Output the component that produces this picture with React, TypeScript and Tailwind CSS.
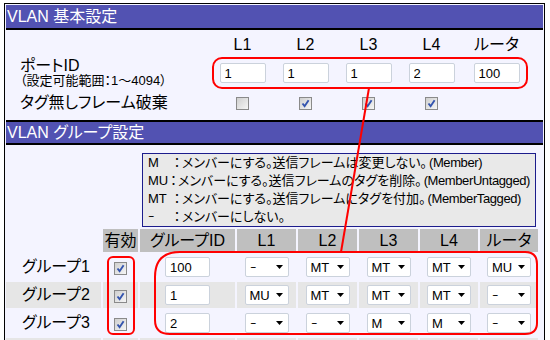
import React from 'react'

const Check = ({ on }: { on: boolean }) => (
  <span className="flex h-[13px] w-[13px] items-center justify-center border border-[#8a8a8a] bg-linear-to-br from-[#cfcfcf] to-[#f6f6f6]">
    {on && (
      <svg width="9" height="9" viewBox="0 0 9 9">
        <path d="M1.5 4.5L3.6 7.2L7.6 1.2" fill="none" stroke="#3454ae" strokeWidth="1.9" />
      </svg>
    )}
  </span>
)

const Field = ({ v, w = 'w-[46px]' }: { v: string; w?: string }) => (
  <input
    readOnly
    value={v}
    className={`${w} h-[20px] rounded-[2px] border border-[#cbd2dc] bg-white px-[4px] text-[13px] text-black outline-none`}
  />
)

// the dash option is drawn narrow, like the original control font
const Dash = () => <span className="inline-block w-[7px] origin-left scale-x-[0.5]">－</span>

const Sel = ({ v }: { v: string }) => (
  <div className="flex h-[20px] w-[44px] items-center justify-between rounded-[2px] border border-[#cbd2dc] bg-white pl-[4px] pr-[5px] text-[13px] leading-none">
    <span>{v === '－' ? <Dash /> : v}</span>
    <svg width="7" height="4" viewBox="0 0 7 4">
      <path d="M0 0H7L3.5 4Z" fill="#000" />
    </svg>
  </div>
)

const cols = ['L1', 'L2', 'L3', 'L4', 'ルータ']
const portIds = ['1', '1', '1', '2', '100']
const untagged = [false, true, true, true]

const legend = [
  ['M', 'メンバーにする。送信フレームは変更しない。', '(Member)'],
  ['MU', 'メンバーにする。送信フレームのタグを削除。', '(MemberUntagged)'],
  ['MT', 'メンバーにする。送信フレームにタグを付加。', '(MemberTagged)'],
  ['－', 'メンバーにしない。', ''],
]

const groups = [
  { name: 'グループ1', id: '100', ports: ['－', 'MT', 'MT', 'MT', 'MU'] },
  { name: 'グループ2', id: '1', ports: ['MU', 'MT', 'MT', 'MT', '－'] },
  { name: 'グループ3', id: '2', ports: ['－', '－', 'M', 'M', '－'] },
]

function Bar({ title, top }: { title: string; top?: boolean }) {
  return (
    <div
      className={`flex h-[25px] items-center border-b-2 border-black bg-[#5252b2] pl-[1px] text-[16px] text-white ${
        top ? 'border-t-2' : ''
      }`}
    >
      {title}
    </div>
  )
}

export default function App() {
  return (
    <div className="relative h-[340px] w-[550px] overflow-hidden bg-white font-['Liberation_Sans','Noto_Sans_CJK_JP',sans-serif] text-black [font-feature-settings:'palt']">
      <div className="ml-[4px] mt-[3px] h-[400px] w-[541px] border border-black bg-[#f4f4ff] p-px">
        <Bar title="VLAN 基本設定" />

        <div className="grid grid-cols-[191px_63px_63px_63px_63px_67px] grid-rows-[18px_30px_22px] gap-y-[4px] pb-[6px] pl-[14px] pt-[6px]">
          <div />
          {cols.map((c) => (
            <div key={c} className="text-center text-[16px] leading-[18px]">
              {c}
            </div>
          ))}

          <div className="flex flex-col whitespace-nowrap">
            <span className="text-[16px] leading-[16px]">ポートID</span>
            <span className="text-[13px] leading-[14px]">（設定可能範囲：1〜4094）</span>
          </div>
          {portIds.map((v, i) => (
            <div key={i} className="flex items-center justify-center">
              <Field v={v} />
            </div>
          ))}

          <div className="flex items-center whitespace-nowrap text-[16px]">タグ無しフレーム破棄</div>
          {untagged.map((on, i) => (
            <div key={i} className="flex items-center justify-center pt-[1px]">
              <Check on={on} />
            </div>
          ))}
          <div />
        </div>

        <Bar title="VLAN グループ設定" top />

        <div className="pt-[8px]">
          <div className="ml-[136px] w-[394px] border border-[#1c1c8c] bg-[#e9e9e9] px-[5px] text-[13px] leading-[18px]">
            {legend.map(([k, t, en]) => (
              <div key={k} className="flex whitespace-nowrap">
                <span className="w-[24px]">{k === '－' ? <Dash /> : k}</span>
                <span className="w-[10px] text-center">：</span>
                <span>{t}</span>
                <span className="pl-[2px] text-[13px] tracking-[-0.4px]">{en}</span>
              </div>
            ))}
          </div>

          <div className="mt-[2px] grid grid-cols-[95px_35px_95px_59px_59px_59px_58px_58px] grid-rows-[23px_26px_26px_26px_26px] gap-[2px] text-[16px]">
            <div />
            {['有効', 'グループID', ...cols].map((h) => (
              <div key={h} className="flex items-center justify-center bg-[#bfbfbf]">
                {h}
              </div>
            ))}

            {groups.map((g, r) => {
              const bg = r === 1 ? 'bg-[#e6e6e6]' : ''
              return (
                <React.Fragment key={g.name}>
                  <div className={`flex items-center pl-[16px] ${bg}`}>{g.name}</div>
                  <div className={`flex items-center justify-center pt-[2px] ${bg}`}>
                    <Check on />
                  </div>
                  <div className={`flex items-center justify-center ${bg}`}>
                    <Field v={g.id} w="w-[45px]" />
                  </div>
                  {g.ports.map((p, i) => (
                    <div key={i} className={`flex items-center justify-center ${bg}`}>
                      <Sel v={p} />
                    </div>
                  ))}
                </React.Fragment>
              )
            })}

            {Array.from({ length: 8 }).map((_, i) => (
              <div key={i} className="bg-[#e6e6e6]" />
            ))}
          </div>
        </div>
      </div>

      <svg className="pointer-events-none absolute inset-0" width="550" height="340" viewBox="0 0 550 340">
        <g fill="none" stroke="#ff0000" strokeWidth="2">
          <rect x="213" y="58" width="314" height="30" rx="9" />
          <path d="M369 88L341 252" />
          <rect x="108" y="257" width="26" height="77" rx="5" />
          <path d="M180 252H525Q537 252 537 264V323Q537 334 525 334H170Q155 334 155 320V277Q155 252 180 252Z" />
        </g>
      </svg>
    </div>
  )
}
